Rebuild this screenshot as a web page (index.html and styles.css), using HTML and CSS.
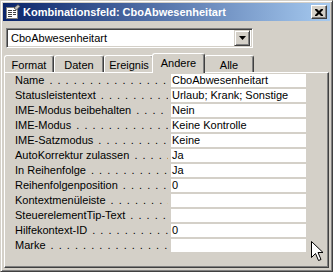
FILE: index.html
```html
<!DOCTYPE html>
<html lang="de">
<head>
    <meta charset="UTF-8">
    <title>Kombinationsfeld: CboAbwesenheitart</title>
    <link rel="stylesheet" href="styles.css">
</head>
<body>
    <div class="window">
        <div class="titlebar">
            <svg class="title-icon" width="16" height="16" viewBox="0 0 16 16">
                <rect x="1.5" y="3.5" width="11" height="11" fill="#fff" stroke="#808080"/>
                <rect x="3" y="6" width="4" height="1" fill="#404040"/>
                <rect x="8" y="6" width="3" height="1" fill="#404040"/>
                <rect x="3" y="8" width="4" height="1" fill="#404040"/>
                <rect x="8" y="8" width="3" height="1" fill="#404040"/>
                <rect x="3" y="10" width="4" height="1" fill="#404040"/>
                <rect x="8" y="10" width="3" height="1" fill="#404040"/>
                <rect x="3" y="12" width="4" height="1" fill="#404040"/>
                <path d="M9 4 L13 0.5 L15 2.5 L11.5 6 Z" fill="#c0c0c0" stroke="#404040" stroke-width="0.8"/>
            </svg>
            <span class="title">Kombinationsfeld: CboAbwesenheitart</span>
            <span class="close-btn">
                <svg width="8" height="7" viewBox="0 0 8 7">
                    <path d="M0 0h2l2 2 2-2h2v1l-2.5 2.5 2.5 2.5v1h-2l-2-2-2 2h-2v-1l2.5-2.5-2.5-2.5z" fill="#000"/>
                </svg>
            </span>
        </div>

        <div class="client">
            <div class="combo">
                <span class="combo-text">CboAbwesenheitart</span>
                <span class="combo-btn">
                    <svg width="7" height="4" viewBox="0 0 7 4"><path d="M0 0h7l-3.5 4z" fill="#000"/></svg>
                </span>
            </div>

            <div class="tabs">
                <div class="tab">Format</div>
                <div class="tab">Daten</div>
                <div class="tab">Ereignis</div>
                <div class="tab active">Andere</div>
                <div class="tab">Alle</div>
            </div>

            <div class="panel">
                <div class="props">
                    <div class="label"><span>Name</span></div>
                    <div class="value">CboAbwesenheitart</div>
                    <div class="label"><span>Statusleistentext</span></div>
                    <div class="value">Urlaub; Krank; Sonstige</div>
                    <div class="label"><span>IME-Modus beibehalten</span></div>
                    <div class="value">Nein</div>
                    <div class="label"><span>IME-Modus</span></div>
                    <div class="value">Keine Kontrolle</div>
                    <div class="label"><span>IME-Satzmodus</span></div>
                    <div class="value">Keine</div>
                    <div class="label"><span>AutoKorrektur zulassen</span></div>
                    <div class="value">Ja</div>
                    <div class="label"><span>In Reihenfolge</span></div>
                    <div class="value">Ja</div>
                    <div class="label"><span>Reihenfolgenposition</span></div>
                    <div class="value">0</div>
                    <div class="label"><span>Kontextmenüleiste</span></div>
                    <div class="value"></div>
                    <div class="label"><span>SteuerelementTip-Text</span></div>
                    <div class="value"></div>
                    <div class="label"><span>Hilfekontext-ID</span></div>
                    <div class="value">0</div>
                    <div class="label"><span>Marke</span></div>
                    <div class="value"></div>
                </div>
            </div>
        </div>

        <!-- Mauszeiger -->
        <svg class="cursor" width="13" height="21" viewBox="0 0 13 21">
            <path d="M0.5 0.5 L0.5 16.5 L4.5 12.5 L7.5 19.5 L10 18.5 L7 11.5 L12 11.5 Z" fill="#fff" stroke="#000" stroke-width="1" stroke-linejoin="miter"/>
        </svg>
    </div>
</body>
</html>
```

FILE: styles.css
```css
* {
    box-sizing: border-box;
}

body {
    margin: 0;
    font-family: "Liberation Sans", Arial, sans-serif;
    font-size: 11px;
    color: #000;
    background: #d4d0c8;
}

.window {
    position: relative;
    width: 333px;
    height: 272px;
    padding: 2px;
    background: #d4d0c8;
    border: 1px solid;
    border-color: #d4d0c8 #404040 #404040 #d4d0c8;
    box-shadow: inset 1px 1px #fff, inset -1px -1px #808080;
    display: flex;
    flex-direction: column;
}

.titlebar {
    height: 18px;
    display: flex;
    align-items: center;
    padding: 0 3px 0 2px;
    background: linear-gradient(to right, #0a246a, #a6caf0);
    color: #fff;
}

.title-icon {
    flex: none;
    margin-right: 2px;
}

.title {
    flex: 1;
    font-weight: bold;
    font-size: 11px;
    white-space: nowrap;
}

.close-btn {
    width: 16px;
    height: 14px;
    display: flex;
    align-items: center;
    justify-content: center;
    background: #d4d0c8;
    border: 1px solid;
    border-color: #fff #404040 #404040 #fff;
    box-shadow: inset -1px -1px #808080;
}

.client {
    flex: 1;
    display: flex;
    flex-direction: column;
    padding: 0 1px 1px 1px;
}

.combo {
    margin: 7px 0 0 2px;
    width: 247px;
    height: 20px;
    display: flex;
    align-items: center;
    background: #fff;
    border: 1px solid;
    border-color: #808080 #fff #fff #808080;
    box-shadow: inset 1px 1px #404040, inset -1px -1px #d4d0c8;
    padding: 2px;
}

.combo-text {
    flex: 1;
    padding-left: 2px;
}

.combo-btn {
    width: 16px;
    height: 16px;
    display: flex;
    align-items: center;
    justify-content: center;
    background: #d4d0c8;
    border: 1px solid;
    border-color: #d4d0c8 #404040 #404040 #d4d0c8;
    box-shadow: inset 1px 1px #fff, inset -1px -1px #808080;
}

.tabs {
    margin-top: 5px;
    height: 19px;
    display: flex;
    align-items: flex-end;
}

.tab {
    width: 50px;
    height: 17px;
    display: flex;
    align-items: center;
    justify-content: center;
    border: 1px solid;
    border-bottom: none;
    border-color: #fff #404040 #fff #fff;
    border-radius: 3px 3px 0 0;
    box-shadow: inset -1px 0 #808080;
    padding-top: 1px;
}

.tab.active {
    position: relative;
    z-index: 1;
    width: 53px;
    height: 20px;
    margin: 0 -1px -1px -2px;
    background: #d4d0c8;
    padding-top: 0;
    padding-bottom: 2px;
}

.panel {
    flex: 1;
    border: 1px solid;
    border-color: #fff #404040 #404040 #fff;
    box-shadow: inset -1px -1px #808080;
    padding-top: 1px;
}

.props {
    display: grid;
    grid-template-columns: 163px 135px;
    grid-auto-rows: 13px;
    column-gap: 3px;
    row-gap: 2px;
}

.label {
    padding-left: 10px;
    overflow: hidden;
    white-space: nowrap;
    line-height: 13px;
}

.label span::after {
    content: " . . . . . . . . . . . . . . . . . . . . . . . . . . . . . . . .";
    word-spacing: 2px;
}

.value {
    background: #fff;
    padding-left: 1px;
    line-height: 13px;
    white-space: nowrap;
    overflow: hidden;
}

.cursor {
    position: absolute;
    left: 310px;
    top: 240px;
}
```
